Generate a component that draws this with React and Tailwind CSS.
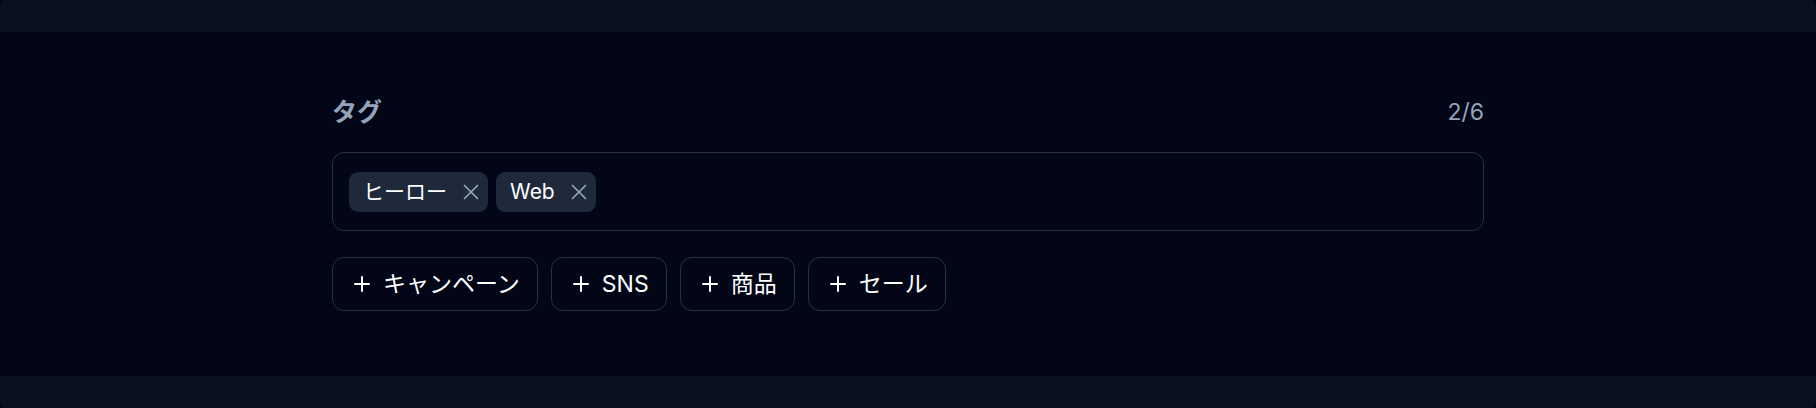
import React, { useState } from 'react';

const FONT = { fontFamily: 'Inter, "Noto Sans CJK JP", "Noto Sans", sans-serif' };

const SUGGESTIONS = ['キャンペーン', 'SNS', '商品', 'セール'];

const XIcon = () => (
  <svg width="24" height="24" viewBox="0 0 24 24" fill="none" stroke="currentColor" strokeWidth="1.7" strokeLinecap="round">
    <path d="M18.5 5.5 5.5 18.5" />
    <path d="m5.5 5.5 13 13" />
  </svg>
);

const PlusIcon = () => (
  <svg width="24" height="24" viewBox="0 0 24 24" fill="none" stroke="currentColor" strokeWidth="2" strokeLinecap="round">
    <path d="M5 12h14" />
    <path d="M12 5v14" />
  </svg>
);

const App = () => {
  const [tags, setTags] = useState(['ヒーロー', 'Web']);

  const removeTag = (t) => setTags(prev => prev.filter(x => x !== t));
  const addTag = (t) => {
    if (tags.includes(t) || tags.length >= 6) return;
    setTags(prev => [...prev, t]);
  };

  return (
    <div className="w-full h-[408px] bg-[#020617] flex flex-col" style={FONT}>
      {/* top strip */}
      <div className="h-8 bg-[#0b1020] rounded-t-lg" />

      <div className="flex-1 pt-[64px]">
        <div className="max-w-6xl mx-auto">

          {/* LABEL ROW */}
          <div className="flex justify-between items-center h-8">
            <span className="text-[25px] font-semibold text-[#94a3b8] leading-8">タグ</span>
            <span className="text-[23px] text-[#94a3b8] leading-8">{tags.length}/6</span>
          </div>

          {/* TAG BOX */}
          <div className="mt-[24px] h-[79px] border border-[#273244] rounded-[12px] px-4 flex items-center gap-2">
            {tags.map(t => (
              <span
                key={t}
                className="h-10 flex items-center pl-[14px] pr-[5px] bg-[#1e293b] rounded-[9px] text-[21px] text-white"
              >
                {t}
                <button onClick={() => removeTag(t)} className="ml-[12px] text-[#94a3b8]">
                  <XIcon />
                </button>
              </span>
            ))}
          </div>

          {/* SUGGESTIONS */}
          <div className="mt-[26px] flex gap-[13px]">
            {SUGGESTIONS.map(s => (
              <button
                key={s}
                onClick={() => addTag(s)}
                className="h-[54px] px-[17px] flex items-center gap-[9px] border border-[#273244] rounded-[12px] text-[23px] text-white"
              >
                <PlusIcon />
                {s}
              </button>
            ))}
          </div>
        </div>
      </div>

      {/* bottom strip */}
      <div className="h-8 bg-[#0b1020] rounded-b-lg" />
    </div>
  );
};

export default App;
